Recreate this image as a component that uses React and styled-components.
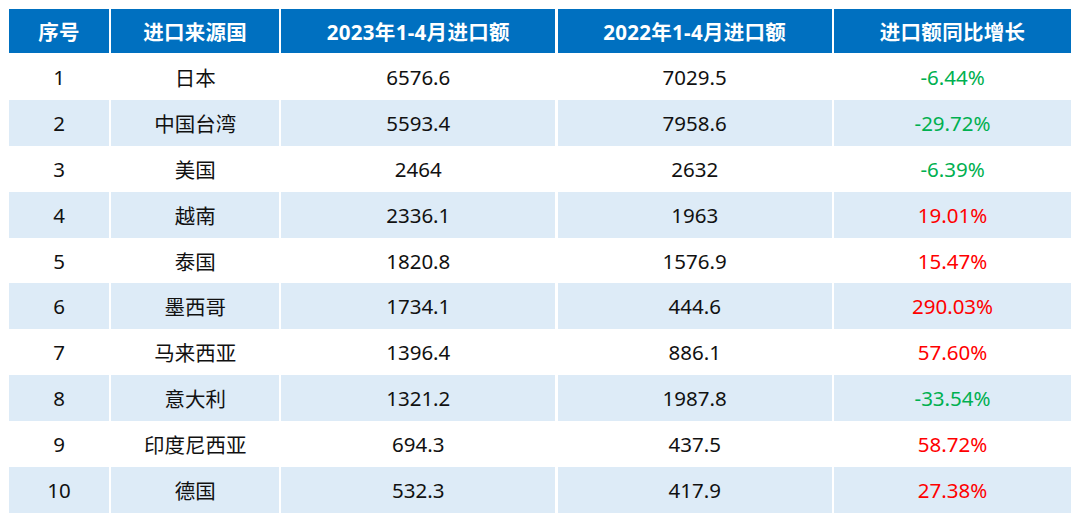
import React from 'react'
import styled, { createGlobalStyle } from 'styled-components'

const rows = [
  ['1', '日本', '6576.6', '7029.5', '-6.44%'],
  ['2', '中国台湾', '5593.4', '7958.6', '-29.72%'],
  ['3', '美国', '2464', '2632', '-6.39%'],
  ['4', '越南', '2336.1', '1963', '19.01%'],
  ['5', '泰国', '1820.8', '1576.9', '15.47%'],
  ['6', '墨西哥', '1734.1', '444.6', '290.03%'],
  ['7', '马来西亚', '1396.4', '886.1', '57.60%'],
  ['8', '意大利', '1321.2', '1987.8', '-33.54%'],
  ['9', '印度尼西亚', '694.3', '437.5', '58.72%'],
  ['10', '德国', '532.3', '417.9', '27.38%'],
]

const headers = ['序号', '进口来源国', '2023年1-4月进口额', '2022年1-4月进口额', '进口额同比增长']

function App() {
  return (
    <>
      <GlobalStyle />
      <Page>
        <Table>
          {headers.map((h) => (
            <HeadCell key={h}>{h}</HeadCell>
          ))}
          {rows.map((r, i) =>
            r.map((v, j) => (
              <Cell
                key={i + '-' + j}
                $shaded={i % 2 === 1}
                $tone={j === 4 ? (v.startsWith('-') ? 'down' : 'up') : null}
              >
                {v}
              </Cell>
            ))
          )}
        </Table>
      </Page>
    </>
  )
}

const GlobalStyle = createGlobalStyle`
  html, body {
    margin: 0;
    padding: 0;
    background: #ffffff;
  }
  body {
    font-family: "Noto Sans", "Noto Sans CJK SC", sans-serif;
  }
`

const Page = styled.div`
  width: 1080px;
  height: 523px;
  padding: 9px 9px 0 9px;
  box-sizing: border-box;
`

const Table = styled.div`
  display: grid;
  grid-template-columns: 100px 167.5px 274px 274px 237px;
  grid-template-rows: 45px repeat(10, 45.9px);
  column-gap: 2.4px;
  width: 1062px;
`

const HeadCell = styled.div`
  display: flex;
  align-items: center;
  justify-content: center;
  background: #0070c0;
  color: #ffffff;
  font-size: 20.5px;
  font-weight: 700;
  letter-spacing: 0.3px;
  border-bottom: 1.5px solid #ffffff;
  box-sizing: border-box;
`

const Cell = styled.div`
  display: flex;
  align-items: center;
  justify-content: center;
  background: ${(p) => (p.$shaded ? '#ddebf7' : '#ffffff')};
  color: ${(p) => (p.$tone === 'down' ? '#00b050' : p.$tone === 'up' ? '#ff0000' : '#111111')};
  font-size: 20.5px;
`

export default App
